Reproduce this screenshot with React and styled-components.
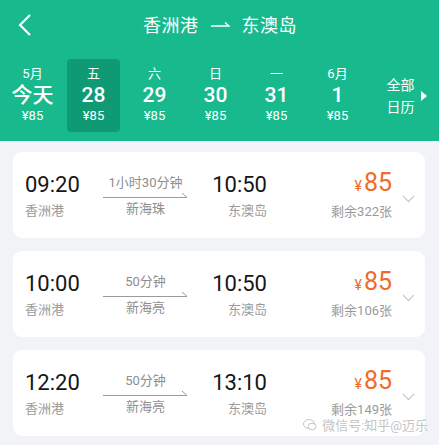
import React from "react";
import styled, { createGlobalStyle } from "styled-components";

const Global = createGlobalStyle`
  html, body { margin: 0; padding: 0; }
  body {
    background: #f2f3f6;
    font-family: Roboto, "Noto Sans CJK SC", "Noto Sans", sans-serif;
    -webkit-font-smoothing: antialiased;
  }
  * { box-sizing: border-box; }
`;

const Page = styled.div`
  width: 439px;
  height: 445px;
  overflow: hidden;
  background: #f2f3f6;
`;

const Header = styled.div`
  background: #17b98d;
  color: #fff;
  height: 141px;
`;

const TopBar = styled.div`
  height: 48px;
  display: flex;
  align-items: center;
  justify-content: center;
  position: relative;
`;

const Back = styled.div`
  position: absolute;
  left: 16px;
  top: 13px;
  width: 20px;
  height: 24px;
  display: flex;
`;

const Title = styled.div`
  display: flex;
  align-items: center;
  gap: 12px;
  font-size: 18px;
  letter-spacing: 0.5px;
  margin-left: 1px;
`;

const DateRow = styled.div`
  display: flex;
  padding: 11px 0 0 2px;
`;

const DateCol = styled.div`
  height: 73px;
  display: flex;
  flex-direction: column;
  align-items: center;
  padding-top: 6px;
  border-radius: 4px;
  background: ${(p) => (p.$active ? "#0f9a74" : "transparent")};
  margin: ${(p) => (p.$active ? "0 4px" : "0")};
  width: ${(p) => (p.$active ? "53px" : "61px")};
`;

const DateTop = styled.div`
  font-size: 13px;
  line-height: 18px;
`;

const DateMain = styled.div`
  font-size: 21px;
  font-weight: 500;
  line-height: 24px;
`;

const DatePrice = styled.div`
  font-size: 13px;
  line-height: 18px;
`;

const AllCal = styled.div`
  flex: 1;
  display: flex;
  align-items: center;
  justify-content: center;
  gap: 6px;
  height: 73px;
  padding-left: 6px;
`;

const AllText = styled.div`
  font-size: 14px;
  line-height: 22px;
  text-align: center;
`;

const Triangle = styled.div`
  width: 0;
  height: 0;
  border-top: 5px solid transparent;
  border-bottom: 5px solid transparent;
  border-left: 6px solid #fff;
`;

const List = styled.div`
  display: flex;
  flex-direction: column;
  gap: 13px;
  padding: 11px 14px 0 13px;
`;

const Card = styled.div`
  position: relative;
  height: 86px;
  background: #fff;
  border-radius: 9px;
  display: grid;
  grid-template-columns: 78px 85px 79px 1fr 33px;
  align-items: center;
  padding-left: 12px;
`;

const Block = styled.div`
  display: flex;
  flex-direction: column;
  align-items: ${(p) => p.$align || "flex-start"};
`;

const Time = styled.div`
  font-size: 22px;
  line-height: 28px;
  color: #161616;
`;

const Station = styled.div`
  font-size: 13px;
  line-height: 18px;
  color: #9a9a9a;
  margin-top: 3px;
`;

const Mid = styled.div`
  display: flex;
  flex-direction: column;
  align-items: center;
  margin-top: 2px;
`;

const Duration = styled.div`
  font-size: 13px;
  line-height: 16px;
  color: #8e8e8e;
`;

const Vessel = styled.div`
  font-size: 13px;
  line-height: 18px;
  color: #8e8e8e;
  margin-top: 1px;
`;

const Price = styled.div`
  color: #ef6b27;
  display: flex;
  align-items: baseline;
  line-height: 28px;
`;

const Yen = styled.span`
  font-size: 14px;
  margin-right: 2px;
`;

const Amount = styled.span`
  font-size: 25px;
`;

const Chevron = styled.div`
  display: flex;
  justify-content: center;
  margin-top: 8px;
`;

const Watermark = styled.div`
  position: absolute;
  right: -3px;
  bottom: 2px;
  display: flex;
  align-items: center;
  gap: 5px;
  font-size: 13px;
  color: #c4c4c4;
  text-shadow: 0 0 2px #fff;
`;

const Arrow = ({ w = 85, color = "#9a9a9a" }) => (
  <svg width={w} height="8" viewBox={`0 0 ${w} 8`}>
    <path d={`M0 6.5 H${w - 1} L${w - 6} 2`} stroke={color} strokeWidth="1" fill="none" />
  </svg>
);

const days = [
  { top: "5月", main: "今天" },
  { top: "五", main: "28", active: true },
  { top: "六", main: "29" },
  { top: "日", main: "30" },
  { top: "一", main: "31" },
  { top: "6月", main: "1" },
];

const trips = [
  { dep: "09:20", dur: "1小时30分钟", boat: "新海珠", arr: "10:50", left: "剩余322张" },
  { dep: "10:00", dur: "50分钟", boat: "新海亮", arr: "10:50", left: "剩余106张" },
  { dep: "12:20", dur: "50分钟", boat: "新海亮", arr: "13:10", left: "剩余149张", mark: true },
];

export default function App() {
  return (
    <Page>
      <Global />
      <Header>
        <TopBar>
          <Back>
            <svg width="20" height="24" viewBox="0 0 20 24">
              <path d="M14 2 L4 12 L14 22" stroke="#fff" strokeWidth="2.2" fill="none" />
            </svg>
          </Back>
          <Title>
            <span>香洲港</span>
            <svg width="19" height="8" viewBox="0 0 19 8">
              <path d="M0 6 H18 L14 2.5" stroke="#fff" strokeWidth="1.4" fill="none" />
            </svg>
            <span>东澳岛</span>
          </Title>
        </TopBar>
        <DateRow>
          {days.map((d) => (
            <DateCol key={d.main} $active={d.active}>
              <DateTop>{d.top}</DateTop>
              <DateMain>{d.main}</DateMain>
              <DatePrice>¥85</DatePrice>
            </DateCol>
          ))}
          <AllCal>
            <AllText>
              全部
              <br />
              日历
            </AllText>
            <Triangle />
          </AllCal>
        </DateRow>
      </Header>
      <List>
        {trips.map((t, i) => (
          <Card key={i}>
            <Block>
              <Time>{t.dep}</Time>
              <Station>香洲港</Station>
            </Block>
            <Mid>
              <Duration>{t.dur}</Duration>
              <Arrow />
              <Vessel>{t.boat}</Vessel>
            </Mid>
            <Block $align="flex-end">
              <Time>{t.arr}</Time>
              <Station>东澳岛</Station>
            </Block>
            <Block $align="flex-end">
              <Price>
                <Yen>¥</Yen>
                <Amount>85</Amount>
              </Price>
              <Station>{t.left}</Station>
            </Block>
            <Chevron>
              <svg width="13" height="8" viewBox="0 0 13 8">
                <path d="M1 1 L6.5 6.5 L12 1" stroke="#cbcbcb" strokeWidth="1.3" fill="none" />
              </svg>
            </Chevron>
            {t.mark && (
              <Watermark>
                <svg width="14" height="12" viewBox="0 0 14 12">
                  <ellipse cx="6" cy="5" rx="5.5" ry="4.5" fill="none" stroke="#c4c4c4" strokeWidth="1" />
                  <ellipse cx="9" cy="7.5" rx="4" ry="3.3" fill="#fff" stroke="#c4c4c4" strokeWidth="1" />
                </svg>
                <span>微信号:知乎@迈乐</span>
              </Watermark>
            )}
          </Card>
        ))}
      </List>
    </Page>
  );
}
